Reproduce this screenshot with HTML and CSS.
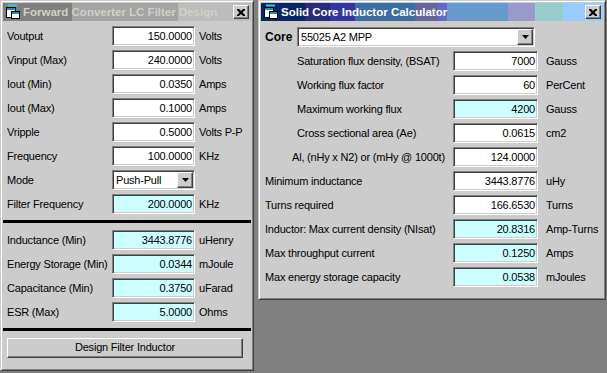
FILE: index.html
```html
<!DOCTYPE html>
<html>
<head>
<meta charset="utf-8">
<title>LC Filter Design</title>
<link rel="stylesheet" href="styles.css">
</head>
<body>
<div class="desktop">
  <div class="win win-left">
    <div class="titlebar tb-inactive">
      <svg class="ticon" width="16" height="16" viewBox="0 0 16 16">
        <rect x="3" y="0.5" width="9" height="2" fill="#33ccee"/>
        <rect x="1.5" y="3.5" width="9" height="10" fill="#fff" stroke="#000"/>
        <rect x="2" y="4" width="8" height="2" fill="#2090b0"/>
        <rect x="6.5" y="7.5" width="8" height="7" fill="#fff" stroke="#000"/>
        <rect x="7" y="8" width="7" height="2" fill="#2090b0"/>
      </svg>
      <span class="ttext">Forward Converter LC Filter Design</span>
      <span class="closebtn"><svg width="8" height="7" viewBox="0 0 8 7"><path d="M0 0h2l2 2 2-2h2v1l-2.5 2.5L8 6v1H6L4 5 2 7H0V6l2.5-2.5L0 1z" fill="#000"/></svg></span>
    </div>
    <div class="lbody">
      <div class="rows">
        <div class="row"><span class="lbl">Voutput</span><span class="field">150.0000</span><span class="unit">Volts</span></div>
        <div class="row"><span class="lbl">Vinput (Max)</span><span class="field">240.0000</span><span class="unit">Volts</span></div>
        <div class="row"><span class="lbl">Iout (Min)</span><span class="field">0.0350</span><span class="unit">Amps</span></div>
        <div class="row"><span class="lbl">Iout (Max)</span><span class="field">0.1000</span><span class="unit">Amps</span></div>
        <div class="row"><span class="lbl">Vripple</span><span class="field">0.5000</span><span class="unit">Volts P-P</span></div>
        <div class="row"><span class="lbl">Frequency</span><span class="field">100.0000</span><span class="unit">KHz</span></div>
        <div class="row"><span class="lbl">Mode</span><span class="combo combo-mode"><span class="ctext">Push-Pull</span><span class="dropbtn"><svg width="7" height="4" viewBox="0 0 7 4"><path d="M0 0h7L3.5 4z" fill="#000"/></svg></span></span></div>
        <div class="row"><span class="lbl">Filter Frequency</span><span class="field calc">200.0000</span><span class="unit">KHz</span></div>
      </div>
      <div class="sep sep1"></div>
      <div class="rows">
        <div class="row"><span class="lbl">Inductance (Min)</span><span class="field calc">3443.8776</span><span class="unit">uHenry</span></div>
        <div class="row"><span class="lbl">Energy Storage (Min)</span><span class="field calc">0.0344</span><span class="unit">mJoule</span></div>
        <div class="row"><span class="lbl">Capacitance (Min)</span><span class="field calc">0.3750</span><span class="unit">uFarad</span></div>
        <div class="row"><span class="lbl">ESR (Max)</span><span class="field calc">5.0000</span><span class="unit">Ohms</span></div>
      </div>
      <div class="sep sep2"></div>
      <div class="button">Design Filter Inductor</div>
    </div>
  </div>

  <div class="win win-right">
    <div class="titlebar tb-active">
      <svg class="ticon" width="16" height="16" viewBox="0 0 16 16">
        <rect x="3" y="0.5" width="9" height="2" fill="#33ccee"/>
        <rect x="1.5" y="3.5" width="9" height="10" fill="#fff" stroke="#000"/>
        <rect x="2" y="4" width="8" height="2" fill="#2090b0"/>
        <rect x="6.5" y="7.5" width="8" height="7" fill="#fff" stroke="#000"/>
        <rect x="7" y="8" width="7" height="2" fill="#2090b0"/>
      </svg>
      <span class="ttext">Solid Core Inductor Calculator</span>
      <span class="closebtn"><svg width="8" height="7" viewBox="0 0 8 7"><path d="M0 0h2l2 2 2-2h2v1l-2.5 2.5L8 6v1H6L4 5 2 7H0V6l2.5-2.5L0 1z" fill="#000"/></svg></span>
    </div>
    <div class="rbody">
      <div class="row"><span class="core-lbl">Core</span><span class="combo combo-core"><span class="ctext">55025 A2 MPP</span><span class="dropbtn"><svg width="7" height="4" viewBox="0 0 7 4"><path d="M0 0h7L3.5 4z" fill="#000"/></svg></span></span></div>
      <div class="row"><span class="rlbl ind">Saturation flux density, (BSAT)</span><span class="field rf">7000</span><span class="runit">Gauss</span></div>
      <div class="row"><span class="rlbl ind">Working flux factor</span><span class="field rf">60</span><span class="runit">PerCent</span></div>
      <div class="row"><span class="rlbl ind">Maximum working flux</span><span class="field rf calc">4200</span><span class="runit">Gauss</span></div>
      <div class="row"><span class="rlbl ind">Cross sectional area (Ae)</span><span class="field rf">0.0615</span><span class="runit">cm2</span></div>
      <div class="row"><span class="rlbl ind-al">Al, (nHy x N2) or (mHy @ 1000t)</span><span class="field rf">124.0000</span><span class="runit"></span></div>
      <div class="row"><span class="rlbl">Minimum inductance</span><span class="field rf">3443.8776</span><span class="runit">uHy</span></div>
      <div class="row"><span class="rlbl">Turns required</span><span class="field rf">166.6530</span><span class="runit">Turns</span></div>
      <div class="row"><span class="rlbl">Inductor: Max current density (NIsat)</span><span class="field rf calc">20.8316</span><span class="runit">Amp-Turns</span></div>
      <div class="row"><span class="rlbl">Max throughput current</span><span class="field rf calc">0.1250</span><span class="runit">Amps</span></div>
      <div class="row"><span class="rlbl">Max energy storage capacity</span><span class="field rf calc">0.0538</span><span class="runit">mJoules</span></div>
    </div>
  </div>
</div>
</body>
</html>
```

FILE: styles.css
```css
* { box-sizing: border-box; }
html, body { margin: 0; padding: 0; }
body {
  background: #808080;
  width: 607px;
  height: 373px;
  overflow: hidden;
  font-family: "Liberation Sans", Arial, sans-serif;
  font-size: 11px;
  letter-spacing: -0.2px;
  color: #000;
}
.desktop {
  display: flex;
  gap: 4px;
  align-items: flex-start;
}
.win {
  background: #cccccc;
  border: 1px solid;
  border-color: #cccccc #404040 #404040 #cccccc;
  box-shadow: inset 1px 1px #ffffff, inset -1px -1px #808080;
  padding: 2px;
  display: flex;
  flex-direction: column;
}
.win-left { width: 254px; height: 371px; }
.win-right { width: 348px; height: 300px; }

.titlebar {
  height: 18px;
  display: flex;
  align-items: center;
  padding: 0 2px;
  flex-shrink: 0;
}
.tb-inactive {
  background: linear-gradient(to right,
    #808080 0, #808080 69px,
    #a4a4a4 69px, #a4a4a4 175px,
    #bcbcbc 175px, #bcbcbc 100%);
}
.tb-active {
  background: linear-gradient(to right,
    #0a246a 0, #0a246a 44px,
    #2a2a7c 44px, #2a2a7c 69px,
    #3434a4 69px, #3434a4 94px,
    #3a6ea5 94px, #3a6ea5 154px,
    #66669c 154px, #66669c 177px,
    #6666cc 177px, #6666cc 186px,
    #6699cc 186px, #6699cc 247px,
    #9999cc 247px, #9999cc 274px,
    #99cccc 274px, #99cccc 302px,
    #99ccff 302px, #99ccff 100%);
}
.ticon { flex-shrink: 0; display: block; }
.ttext {
  flex: 1;
  margin-left: 2px;
  font-weight: bold;
  font-size: 11.5px;
  letter-spacing: 0;
  white-space: nowrap;
  overflow: hidden;
}
.tb-inactive .ttext { color: #d4d0c8; }
.tb-active .ttext { color: #ffffff; }
.closebtn {
  width: 16px;
  height: 14px;
  flex-shrink: 0;
  background: #cccccc;
  border: 1px solid;
  border-color: #ffffff #404040 #404040 #ffffff;
  box-shadow: inset -1px -1px #808080;
  display: flex;
  align-items: center;
  justify-content: center;
  padding-right: 1px;
}
.closebtn svg { display: block; }

/* left body */
.lbody {
  padding: 5px 4px 0 4px;
  display: flex;
  flex-direction: column;
}
.rows {
  display: flex;
  flex-direction: column;
  gap: 4px;
}
.row {
  display: flex;
  align-items: center;
  height: 20px;
  white-space: nowrap;
}
.lbl { width: 105px; flex-shrink: 0; }
.unit { margin-left: 4px; }

.field {
  width: 83px;
  height: 20px;
  flex-shrink: 0;
  background: #ffffff;
  border: 1px solid;
  border-color: #808080 #ffffff #ffffff #808080;
  box-shadow: inset 1px 1px #404040, inset -1px -1px #cccccc;
  text-align: right;
  padding: 0 2px 0 3px;
  line-height: 18px;
}
.field.calc { background: #ccffff; }

.combo {
  height: 20px;
  flex-shrink: 0;
  display: flex;
  align-items: center;
  background: #ffffff;
  border: 1px solid;
  border-color: #808080 #ffffff #ffffff #808080;
  box-shadow: inset 1px 1px #404040, inset -1px -1px #cccccc;
  padding: 1px;
}
.combo-mode { width: 83px; }
.combo-core { width: 238px; }
.ctext { flex: 1; padding-left: 2px; line-height: 16px; }
.dropbtn {
  width: 16px;
  height: 16px;
  background: #cccccc;
  border: 1px solid;
  border-color: #ffffff #404040 #404040 #ffffff;
  box-shadow: inset -1px -1px #808080;
  display: flex;
  align-items: center;
  justify-content: center;
}
.dropbtn svg { display: block; }

.sep {
  height: 3px;
  background: #000;
  margin: 0 -4px;
}
.sep1 { margin-top: 6px; margin-bottom: 7px; }
.sep2 { margin-top: 6px; margin-bottom: 7px; }

.button {
  width: 236px;
  height: 20px;
  background: #cccccc;
  border: 1px solid;
  border-color: #ffffff #404040 #404040 #ffffff;
  box-shadow: inset -1px -1px #808080;
  text-align: center;
  line-height: 17px;
}

/* right body */
.rbody {
  padding: 6px 4px 0 4px;
  display: flex;
  flex-direction: column;
  gap: 4px;
}
.core-lbl {
  width: 32px;
  flex-shrink: 0;
  font-weight: bold;
  font-size: 12px;
  letter-spacing: 0;
}
.rlbl { width: 188px; flex-shrink: 0; overflow: visible; }
.rlbl.ind { padding-left: 32px; }
.rlbl.ind-al { padding-left: 27px; }
.field.rf { width: 85px; }
.runit { margin-left: 8px; }
```
